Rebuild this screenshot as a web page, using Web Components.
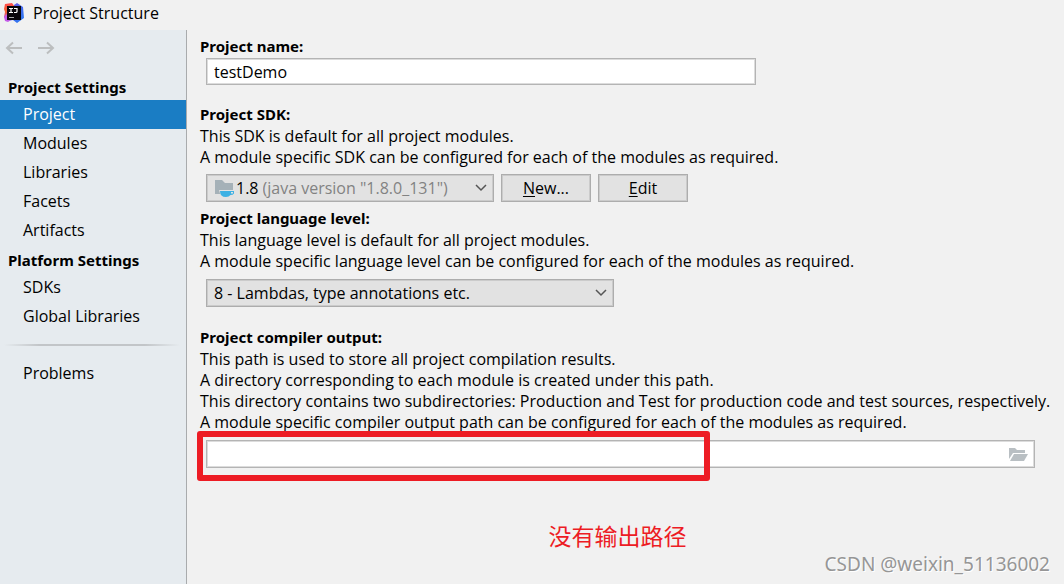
<!DOCTYPE html>
<html lang="en">
<head>
<meta charset="utf-8">
<title>Project Structure</title>
<style>
html, body { margin: 0; height: 100%; }
body { font: 16px/21px "Open Sans", "Noto Sans CJK SC", sans-serif; color: #000; background: #f1f1f1; }
</style>
</head>
<body>
<project-structure></project-structure>
<script>
const define = (name, html) => customElements.define(name, class extends HTMLElement {
  constructor() {
    super();
    const t = document.createElement('template');
    t.innerHTML = html;
    this.attachShadow({ mode: 'open' }).append(t.content.cloneNode(true));
  }
});

define('title-bar', `
<style>
:host { display: flex; align-items: center; gap: 9px; height: 30px; padding: 0 4px; box-sizing: border-box; }
svg { width: 20px; height: 20px; margin-bottom: 4px; }
h1 { margin: 0 0 4px; font-size: 16px; font-weight: inherit; }
</style>
<svg viewBox="0 0 20 20" aria-hidden="true">
  <defs><linearGradient id="w" x1="0" y1="0" x2="0" y2="1"><stop offset="0" stop-color="#ff4a4d"/><stop offset=".5" stop-color="#f5642f"/><stop offset="1" stop-color="#b94bd8"/></linearGradient>
  <linearGradient id="b" x1="0" y1="0" x2="1" y2="1"><stop offset="0" stop-color="#8a4fd0"/><stop offset=".5" stop-color="#4667ee"/><stop offset="1" stop-color="#2a7df0"/></linearGradient></defs>
  <path d="M1 1 8 0l3 4-3 12-5 1-3-3 1-5-1-3z" fill="url(#w)"/>
  <path d="M10 2 13 0l6 4 1 11-7 5-4-3-6 1-2-3 9-2z" fill="url(#b)"/>
  <path d="M0 14l3-3 4 6-3 2-3-1z" fill="#c45be8"/>
  <path d="M3 3h14v14H3z" fill="#080509"/>
  <path d="M5 5.500h4M7 5.500v4M5 9.500h4M10 5.500h3v3q0 1-1 1h-2" fill="none" stroke="#fff" stroke-width="1.2"/>
  <path d="M5 14.500h5" stroke="#aaa"/>
</svg>
<h1><slot></slot></h1>`);

define('nav-arrows', `
<style>
:host { display: flex; gap: 16px; padding: 9px 5px 0; }
button { width: 17px; height: 18px; padding: 0; border: 0; background: none; }
svg { display: block; }
path { fill: none; stroke: #bcbebf; stroke-width: 2; }
</style>
<button aria-label="Back" disabled><svg width="17" height="18"><path d="M17 9H2M8 3.500 2 9l6 5.500"/></svg></button>
<button aria-label="Forward" disabled><svg width="17" height="18"><path d="M0 9h15M9 3.500 15 9l-6 5.500"/></svg></button>`);

define('nav-group', `
<style>
:host { display: block; margin-top: 3px; }
h2 { margin: 0; padding-left: 8px; font: 700 15px/25px "Noto Sans", sans-serif; }
</style>
<h2><slot name="title"></slot></h2>
<slot></slot>`);

define('nav-item', `
<style>
:host { display: block; }
a { display: block; padding-left: 23px; line-height: 29px; color: inherit; text-decoration: none; }
:host([selected]) a { background: #1a7dc4; color: #fff; }
</style>
<a href="#"><slot></slot></a>`);

define('side-bar', `
<style>
:host { display: block; box-sizing: border-box; width: 187px; flex: none; background: #e6ebef; border-right: 1px solid #a9abad; }
nav { padding-top: 15px; }
hr { height: 2px; margin: 13px 6px 13px 4px; border: 0; background: linear-gradient(90deg, transparent, #c2c5c8 20%, #c2c5c8 80%, transparent); }
</style>
<nav-arrows></nav-arrows>
<nav aria-label="Settings">
  <nav-group><span slot="title">Project Settings</span>
    <nav-item selected>Project</nav-item><nav-item>Modules</nav-item><nav-item>Libraries</nav-item><nav-item>Facets</nav-item><nav-item>Artifacts</nav-item>
  </nav-group>
  <nav-group><span slot="title">Platform Settings</span>
    <nav-item>SDKs</nav-item><nav-item>Global Libraries</nav-item>
  </nav-group>
  <hr>
  <nav-item>Problems</nav-item>
</nav>`);

const field = `
:host { display: block; }
label { display: block; margin-bottom: 1px; font: 700 15px/21px "Noto Sans", sans-serif; }
p { margin: 0; white-space: nowrap; }
.row { display: flex; gap: 7px; margin: 7px 0 0 6px; }
input, select, button { font: inherit; color: inherit; box-sizing: border-box; margin: 0; outline: 0; }
input { height: 28px; padding: 0 7px; border: 1px solid #b4b4b4; border-radius: 0; background: #fff; box-shadow: inset 0 0 0 1px #dcdcdc; min-width: 0; }
.combo { display: flex; align-items: center; position: relative; box-sizing: border-box; height: 28px; border: 1px solid #adadad; box-shadow: inset 0 0 0 1px #cbcbcb; background: #e2e2e2; }
.combo select { flex: 1; min-width: 0; height: 26px; padding: 0 24px 0 7px; border: 0; background: none; appearance: none; }
.combo .arrow { position: absolute; right: 6px; top: 9px; pointer-events: none; }
.arrow path { fill: none; stroke: #555; stroke-width: 1.500; }
`;
const arrow = `<svg class="arrow" width="12" height="8" aria-hidden="true"><path d="M1 1l5 5 5-5"/></svg>`;

define('project-name', `
<style>${field}
.row { margin-top: 0; }
input { width: 550px; height: 27px; }
</style>
<label for="name">Project name:</label>
<div class="row"><input id="name" value="testDemo"></div>`);

define('project-sdk', `
<style>${field}
.row { margin-top: 6px; }
.combo { width: 288px; }
.combo .icon { margin-left: 8px; flex: none; }
.combo select { color: #828282; padding-left: 4px; opacity: 1; }
button { width: 90px; height: 28px; padding: 0; border: 1px solid #adadad; box-shadow: inset 0 0 0 1px #cbcbcb; background: #e2e2e2; }
u { text-underline-offset: 2px; }
</style>
<label for="sdk">Project SDK:</label>
<p>This SDK is default for all project modules.</p>
<p>A module specific SDK can be configured for each of the modules as required.</p>
<div class="row">
  <div class="combo">
    <svg class="icon" width="21" height="20" aria-hidden="true">
      <path d="M0 2h7l3 3h8v11H0z" fill="#a5b1b8"/>
      <path d="M4 12h16v4l-3 3H6z" fill="#e2e2e2"/>
      <path d="M5 13h14v2.500q-1 1.500-3.500 1.500-1.500 2-4.500 2-6 0-6-6z" fill="#3db1e4"/>
      <path d="M16 14h2v1.500h-2z" fill="#e2e2e2"/>
    </svg>
    <span>1.8</span>
    <select id="sdk"><option>(java version "1.8.0_131")</option></select>${arrow}
  </div>
  <button><u>N</u>ew...</button>
  <button><u>E</u>dit</button>
</div>`);

define('language-level', `
<style>${field}
.combo { width: 408px; }
</style>
<label for="level">Project language level:</label>
<p>This language level is default for all project modules.</p>
<p>A module specific language level can be configured for each of the modules as required.</p>
<div class="row"><div class="combo"><select id="level"><option>8 - Lambdas, type annotations etc.</option></select>${arrow}</div></div>`);

define('compiler-output', `
<style>${field}
.row { position: relative; }
input { flex: 1; padding-right: 32px; }
.browse { position: absolute; right: 7px; top: 7px; width: 20px; height: 15px; padding: 0; border: 0; background: none; }
.browse svg { display: block; }
.mark { position: absolute; left: -9px; top: -9px; width: 513px; height: 50px; box-sizing: border-box; border: 6px solid #ed1c24; border-radius: 3px; pointer-events: none; }
</style>
<label for="out">Project compiler output:</label>
<p>This path is used to store all project compilation results.</p>
<p>A directory corresponding to each module is created under this path.</p>
<p>This directory contains two subdirectories: Production and Test for production code and test sources, respectively.</p>
<p>A module specific compiler output path can be configured for each of the modules as required.</p>
<div class="row">
  <input id="out">
  <button class="browse" aria-label="Browse"><svg width="20" height="15"><path d="M1 1h6l2 2h8v3H5L1 12z" fill="#b9bfc3"/><path d="M6 7h14l-4 7H2z" fill="#b9bfc3"/></svg></button>
  <div class="mark"></div>
</div>`);

define('settings-page', `
<style>
:host { display: block; flex: 1; min-width: 0; padding: 6px 29px 0 13px; }
project-sdk { margin-top: 19px; }
language-level { margin-top: 6px; }
compiler-output { margin-top: 20px; }
.note { margin: 52px 0 0; text-align: center; font: 400 23px/30px "Noto Sans CJK SC", sans-serif; color: #ed1c24; }
</style>
<project-name></project-name>
<project-sdk></project-sdk>
<language-level></language-level>
<compiler-output></compiler-output>
<p class="note" lang="zh">没有输出路径</p>`);

define('project-structure', `
<style>
:host { display: flex; flex-direction: column; min-height: 100%; position: relative; }
.body { display: flex; flex: 1; }
.watermark { position: absolute; right: 14px; bottom: 6px; font: 19px/28px "Noto Sans", sans-serif; color: #969696; text-shadow: 1px 1px 0 #fff; }
</style>
<title-bar>Project Structure</title-bar>
<div class="body"><side-bar></side-bar><settings-page></settings-page></div>
<div class="watermark">CSDN @weixin_51136002</div>`);
</script>
</body>
</html>
